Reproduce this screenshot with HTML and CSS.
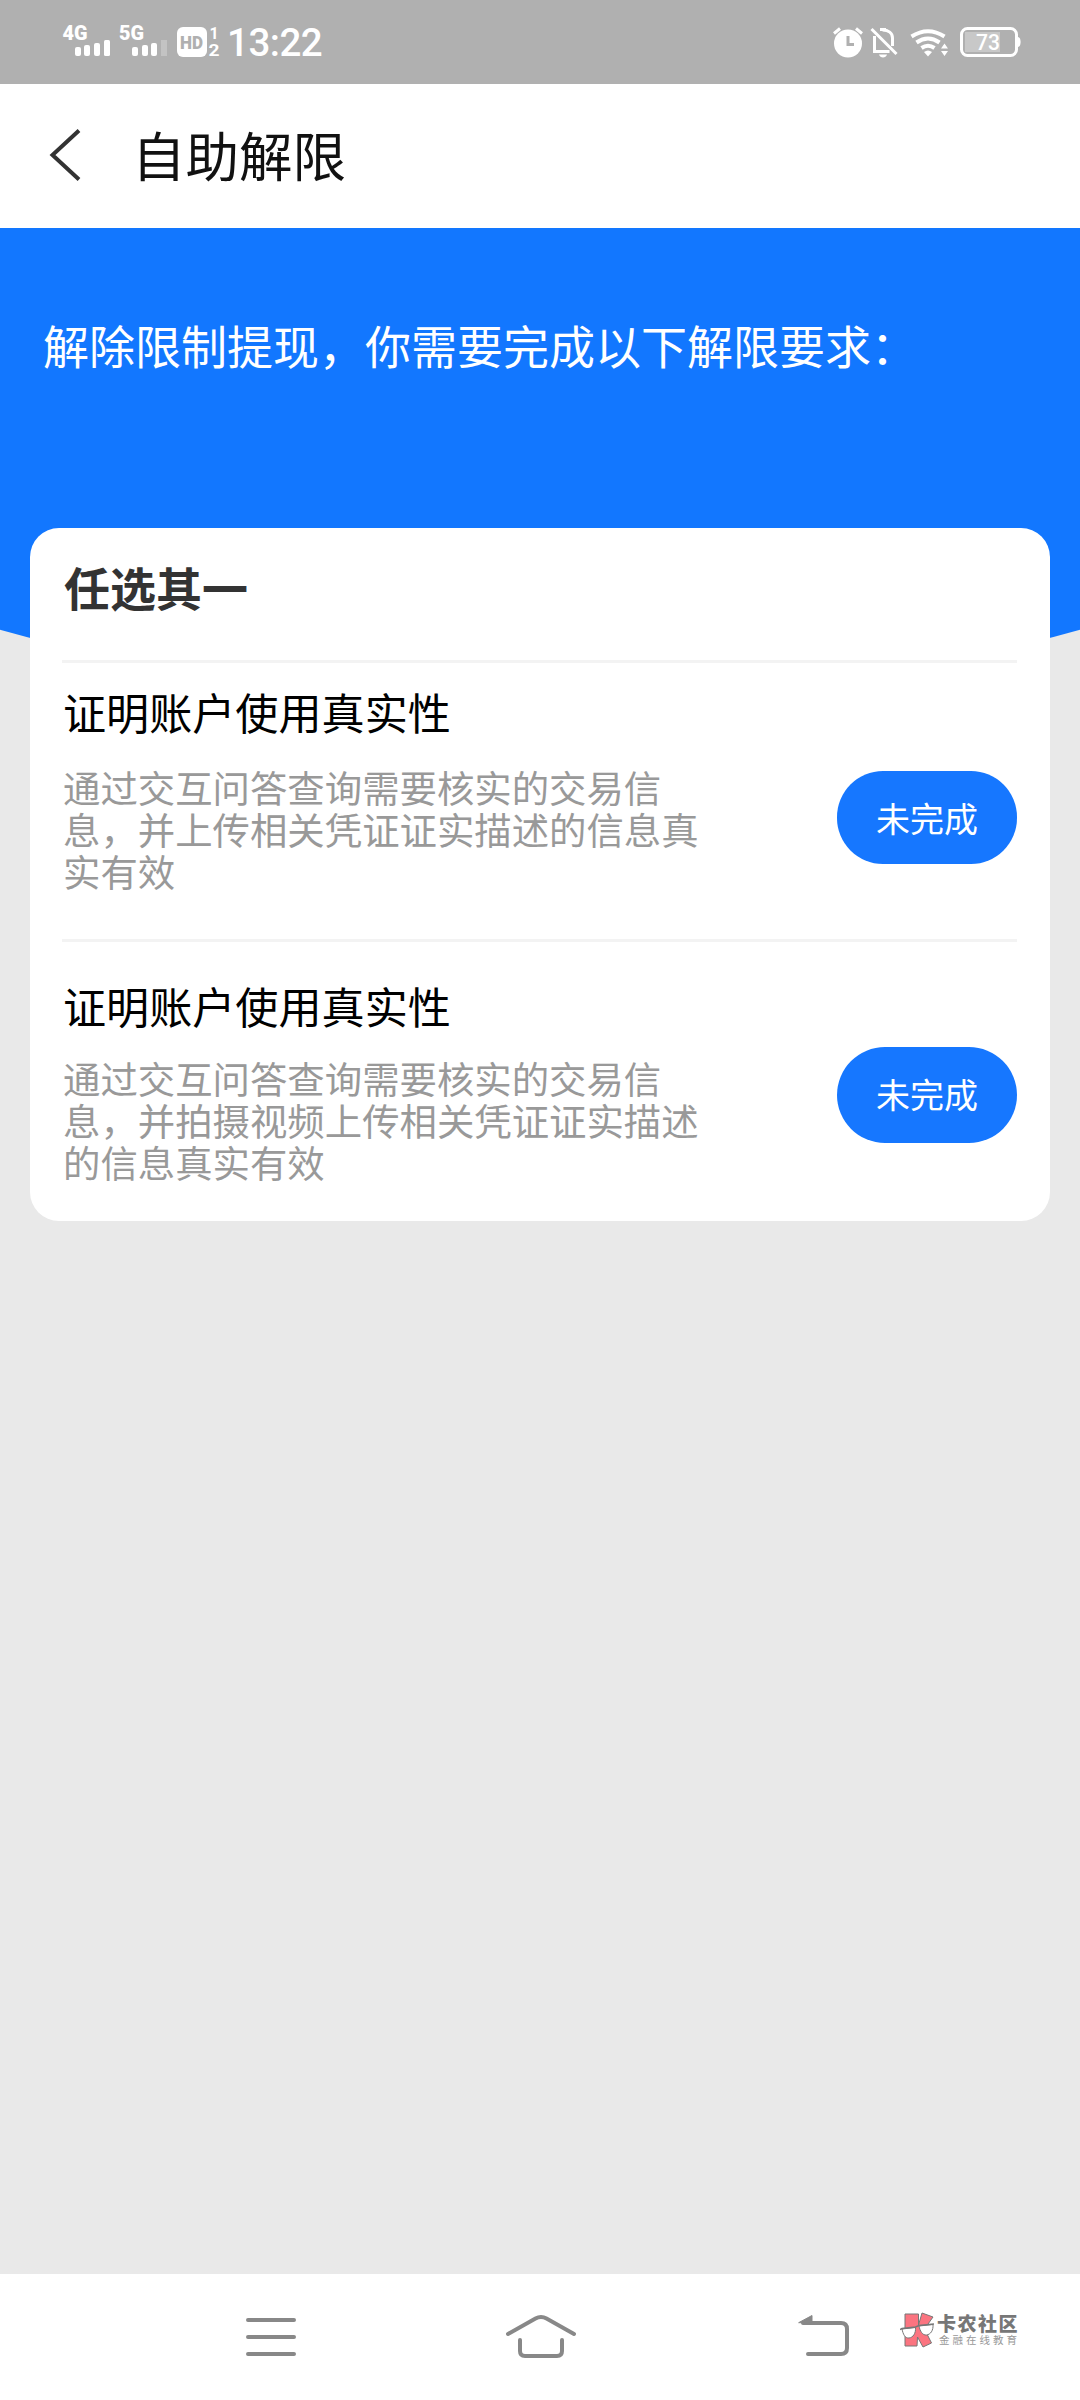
FILE: index.html
```html
<!DOCTYPE html>
<html lang="zh-CN">
<head>
  <meta charset="UTF-8" />
  <meta name="viewport" content="width=device-width, initial-scale=1.0" />
  <title>自助解限</title>
  <link rel="stylesheet" href="styles.css">
</head>
<body>
  <!-- Status bar -->
  <div class="status-bar">
    <div class="status-left">
      <svg class="signal" width="120" height="84" viewBox="60 0 120 84">
        <text class="net" x="62.500" y="40" textLength="25" lengthAdjust="spacingAndGlyphs">4G</text>
        <rect x="75" y="47" width="6" height="9" rx="2" />
        <rect x="84" y="45" width="6" height="11" rx="2" />
        <rect x="94" y="43" width="6" height="13" rx="2" />
        <rect x="104" y="40" width="6" height="16" rx="1.5" />
        <text class="net" x="119" y="40" textLength="25" lengthAdjust="spacingAndGlyphs">5G</text>
        <rect x="132" y="47" width="6" height="9" rx="2" />
        <rect x="142" y="45" width="6" height="11" rx="2" />
        <rect x="151" y="43" width="6" height="13" rx="2" />
        <rect class="dim" x="161" y="40" width="6" height="16" />
      </svg>
      <svg width="46" height="84" viewBox="175 0 46 84">
        <rect x="177" y="27" width="30" height="30" rx="6" />
        <text class="hd" x="180" y="49" textLength="23" lengthAdjust="spacingAndGlyphs">HD</text>
        <text class="sim" x="209.500" y="39">1</text>
        <text class="sim" x="208.500" y="56" textLength="11" lengthAdjust="spacingAndGlyphs">2</text>
      </svg>
      <span class="time">13:22</span>
    </div>
    <div class="status-right">
      <!-- alarm -->
      <svg width="34" height="84" viewBox="831 0 34 84">
        <circle cx="848" cy="43.500" r="14" />
        <path class="line" d="M834 33.500l6-5M862 33.500l-6-5" />
        <path class="cut" d="M848 36v8.500h6" />
      </svg>
      <!-- muted bell -->
      <svg width="30" height="84" viewBox="869 0 30 84">
        <path class="line" d="M874.500 36v15.500h15M892.500 46v-8c0-5-4-8-10-8" />
        <path class="line" d="M871.500 29l25 25" />
        <path d="M879 54.500h8c-1 4-7 4-8 0z" />
        <rect x="880" y="28" width="6" height="3" />
      </svg>
      <!-- wifi -->
      <svg width="40" height="84" viewBox="908 0 40 84">
        <path class="wave" d="M911.500 36.500q16.500-10.500 33 0M916.500 42.500q11.500-8 23 0M921.500 48q6.500-4.500 13 0" />
        <path d="M924 52q4-3 8 0l-4 4.500z" />
        <path d="M941 48.500l3.500-5 3.500 5zM941 51l3.500 5 3.500-5z" />
      </svg>
      <!-- battery -->
      <svg width="62" height="84" viewBox="959 0 62 84">
        <rect class="shell" x="961.500" y="28.500" width="55" height="27" rx="6" />
        <rect class="level" x="965" y="32" width="35" height="20" />
        <path d="M1018 37c3.500 0 3.500 10 0 10z" />
        <text class="percent" x="976" y="50" textLength="24" lengthAdjust="spacingAndGlyphs">73</text>
      </svg>
    </div>
  </div>

  <!-- Title bar -->
  <div class="title-bar">
    <svg class="back" width="32" height="52" viewBox="0 0 32 52">
      <path d="M30 1.500L3.500 26 30 50.500" />
    </svg>
    <h1>自助解限</h1>
  </div>

  <!-- Content -->
  <div class="content">
    <div class="hero">
      <p>解除限制提现，你需要完成以下解限要求：</p>
    </div>

    <div class="card">
      <h2>任选其一</h2>
      <div class="item first">
        <div class="info">
          <h3>证明账户使用真实性</h3>
          <p>通过交互问答查询需要核实的交易信息，并上传相关凭证证实描述的信息真实有效</p>
        </div>
        <button class="btn">未完成</button>
      </div>
      <div class="item second">
        <div class="info">
          <h3>证明账户使用真实性</h3>
          <p>通过交互问答查询需要核实的交易信息，并拍摄视频上传相关凭证证实描述的信息真实有效</p>
        </div>
        <button class="btn">未完成</button>
      </div>
    </div>
  </div>

  <!-- Navigation keys -->
  <div class="nav">
    <svg class="key-menu" width="50" height="40" viewBox="246 2317 50 40">
      <path d="M248 2320h46M248 2337h46M248 2354h46" />
    </svg>
    <svg class="key-home" width="72" height="46" viewBox="505 2313 72 46">
      <path d="M508 2334l27.500-15.500q5.500-3 11 0L574 2334" />
      <path d="M520 2340v11q0 5 5 5h32q5 0 5-5v-11" />
    </svg>
    <svg class="key-back" width="52" height="44" viewBox="798 2314 52 44">
      <path d="M808 2354h33q6 0 6-6v-19q0-6-6-6h-38" />
      <path class="head" d="M799 2322.500l13-7v7z" />
    </svg>
    <div class="brand">
      <svg width="36" height="36" viewBox="0 0 36 36">
        <path class="k" d="M5 2h13.500v11L22 1l11 4-8.500 12L31.500 31 23 35l-5.500-10-.5 9H5z" />
        <path class="lens" d="M2 17l13.500-1.500c.5 6-2.500 10-6.500 10.500s-6-4-7-9zM19 14l14-1.500c.5 6-2.500 10-6.500 10.500S20 19 19 14z" />
        <path class="rim" d="M0 17.500l2-1 13.500-1.500 3.500-1.500L34 12" />
      </svg>
      <div class="brand-text">
        <span class="brand-name">卡农社区</span>
        <span class="brand-sub">金融在线教育</span>
      </div>
    </div>
  </div>
</body>
</html>
```

FILE: styles.css
```css
* {
  box-sizing: border-box;
  margin: 0;
  padding: 0;
}

body {
  display: flex;
  flex-direction: column;
  width: 1080px;
  height: 2400px;
  overflow: hidden;
  background: #e9e9e9;
  font-family: "Noto Sans CJK SC", "Noto Sans", sans-serif;
}

svg {
  display: block;
  flex: none;
}

/* status bar */
.status-bar {
  display: flex;
  justify-content: space-between;
  height: 84px;
  padding: 0 59px 0 60px;
  background: #b0b0b0;
  color: #fff;
  font-family: Roboto, sans-serif;
}

.status-bar svg {
  fill: #fff;
}

.status-left,
.status-right {
  display: flex;
}

.signal {
  margin-right: -5px;
}

.net {
  font-size: 21px;
  font-weight: 900;
}

.dim {
  fill: #c3c3c3;
}

.hd {
  font-size: 18px;
  font-weight: 900;
  fill: #b0b0b0;
}

.sim {
  font-size: 16px;
  font-weight: 700;
}

.time {
  margin-left: 6px;
  font-size: 38.5px;
  font-weight: 500;
  line-height: 85px;
  letter-spacing: -0.5px;
}

.status-right svg + svg {
  margin-left: 4px;
}

.status-right svg:nth-child(3) {
  margin-left: 9px;
}

.status-right svg:nth-child(4) {
  margin-left: 11px;
}

.line {
  fill: none;
  stroke: #fff;
  stroke-width: 3;
}

.cut {
  fill: none;
  stroke: #b0b0b0;
  stroke-width: 3;
}

.wave {
  fill: none;
  stroke: #fff;
  stroke-width: 4;
}

.shell {
  fill: none;
  stroke: #fff;
  stroke-width: 3;
}

.level {
  fill: #c8c8c8;
}

.percent {
  font-size: 22px;
  font-weight: 500;
}

/* title bar */
.title-bar {
  display: flex;
  align-items: center;
  height: 144px;
  padding-left: 49px;
  background: #fff;
}

.back {
  margin-right: 51px;
  margin-bottom: 2px;
}

.back path {
  fill: none;
  stroke: #333;
  stroke-width: 4;
}

.title-bar h1 {
  padding-bottom: 5px;
  font-size: 53.5px;
  font-weight: 400;
  line-height: 134px;
  color: #111;
}

/* content */
.content {
  flex: 1;
}

.hero {
  height: 476px;
  padding: 83px 43px;
  background: #1277ff;
  clip-path: circle(2000px at 50% -1524px);
}

.hero p {
  font-size: 46px;
  line-height: 66px;
  color: #fff;
  white-space: nowrap;
}

.card {
  position: relative;
  height: 693px;
  margin: -176px 30px 0;
  padding: 0 33px 0 32px;
  border-radius: 29px;
  background: #fff;
}

.card h2 {
  height: 132px;
  padding-left: 2px;
  font-size: 46px;
  font-weight: 700;
  line-height: 117px;
  color: #333;
}

.item {
  display: flex;
  justify-content: space-between;
  border-top: 3px solid #f3f3f3;
}

.first {
  height: 279px;
  padding-top: 17px;
}

.second {
  padding-top: 32px;
}

.info {
  width: 650px;
  padding-left: 1px;
}

.info h3 {
  margin-bottom: 24px;
  font-size: 43.1px;
  font-weight: 400;
  line-height: 62px;
  color: #000;
}

.second h3 {
  margin-bottom: 21px;
}

.info p {
  width: 640px;
  font-size: 37.4px;
  line-height: 42px;
  color: #999;
}

.btn {
  width: 180px;
  height: 93px;
  margin-top: 91px;
  border: none;
  border-radius: 46px;
  background: #1677ff;
  color: #fff;
  font-family: inherit;
  font-size: 34px;
}

.first .btn {
  padding-bottom: 1px;
}

.second .btn {
  height: 96px;
  margin-top: 73px;
  padding-bottom: 3px;
  border-radius: 48px;
}

/* navigation keys */
.nav {
  display: flex;
  height: 126px;
  padding-left: 246px;
  background: #fff;
}

.nav > svg {
  fill: none;
  stroke: #888;
  stroke-width: 4;
  stroke-linecap: round;
}

.key-menu {
  margin-top: 43px;
}

.key-home {
  margin-top: 39px;
  margin-left: 209px;
}

.key-back {
  margin-top: 40px;
  margin-left: 221px;
}

.head {
  fill: #888;
  stroke-width: 1;
}

.brand {
  display: flex;
  margin-top: 38px;
  margin-left: 50px;
}

.k {
  fill: #fb7480;
  stroke: #777;
  stroke-width: 1;
}

.lens {
  fill: #fff;
  stroke: #777;
  stroke-width: 1;
}

.rim {
  fill: none;
  stroke: #777;
  stroke-width: 1.5;
}

.brand-text {
  display: flex;
  flex-direction: column;
  margin-left: 1px;
  white-space: nowrap;
}

.brand-name {
  font-size: 19px;
  font-weight: 900;
  line-height: 22px;
  letter-spacing: 1.5px;
  color: #777;
}

.brand-sub {
  padding-left: 2px;
  font-size: 10.5px;
  line-height: 12px;
  letter-spacing: 3px;
  color: #999;
}
```
